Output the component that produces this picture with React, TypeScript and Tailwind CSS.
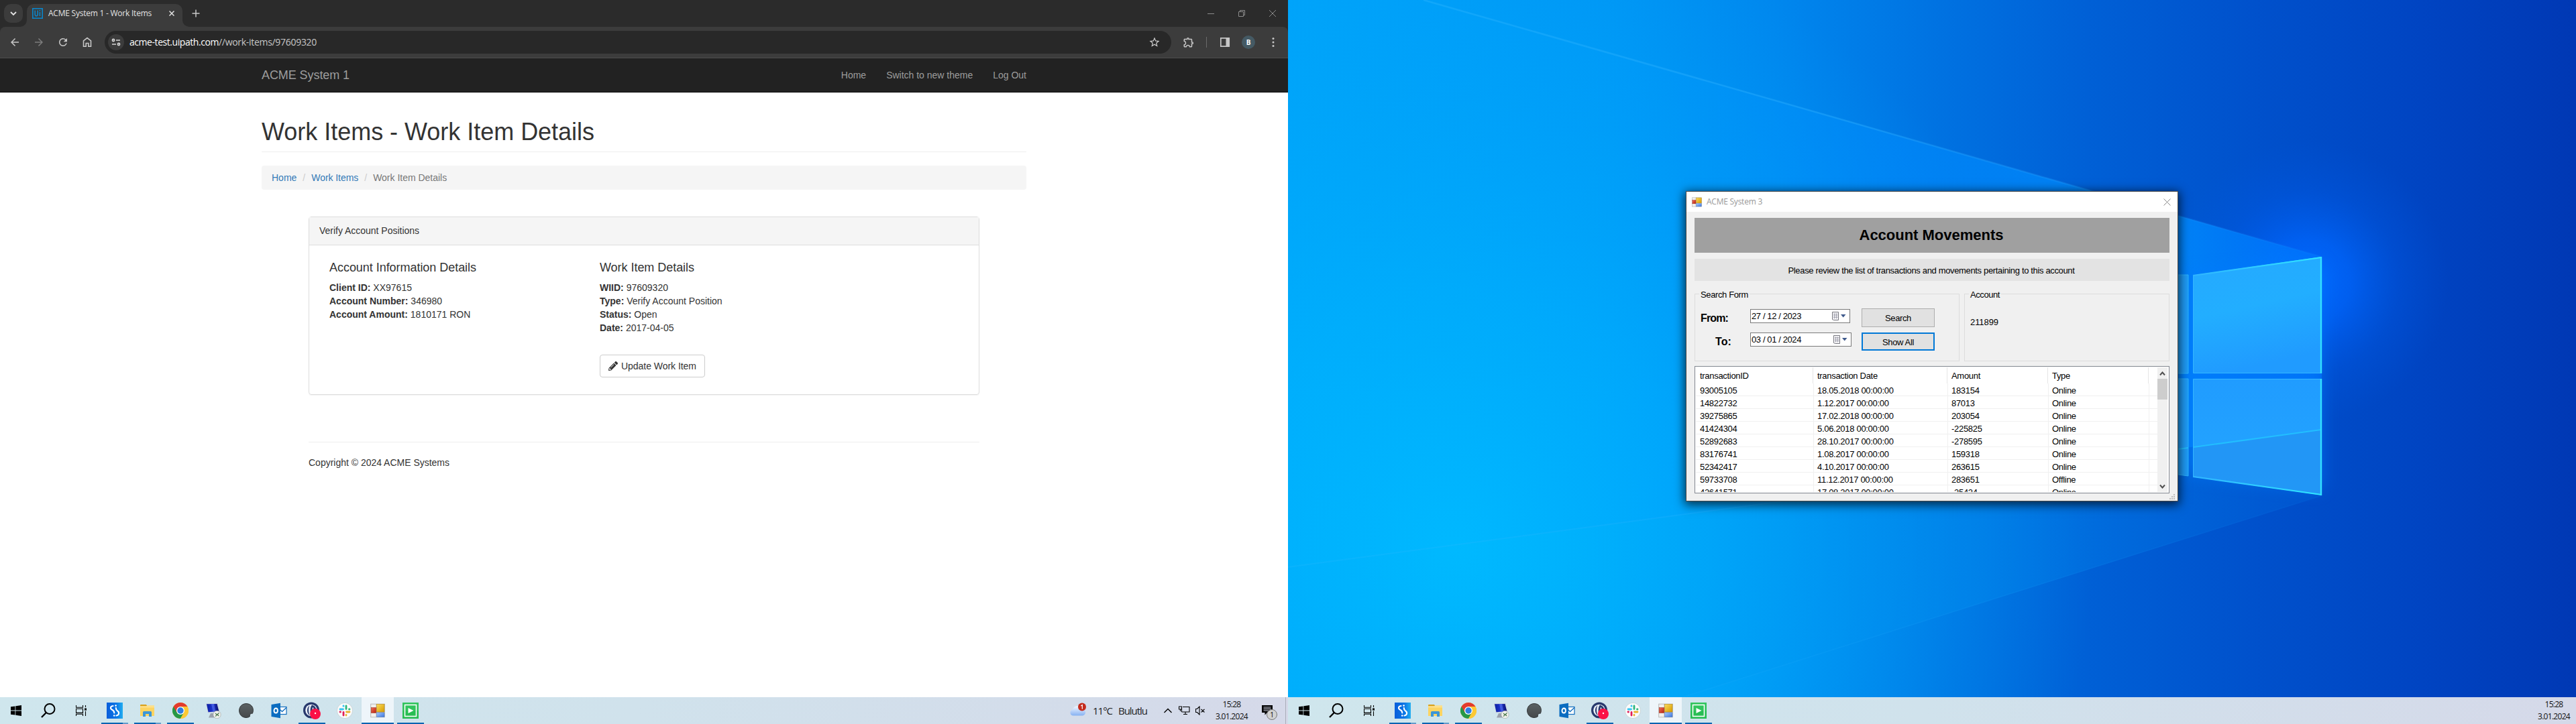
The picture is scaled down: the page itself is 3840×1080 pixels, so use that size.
import React, { useLayoutEffect, useRef, useState } from "react";
import { MdArrowBack, MdArrowForward, MdRefresh, MdStarBorder, MdOutlineExtension } from "react-icons/md";
import { FaPencilAlt } from "react-icons/fa";

const UI = "font-['Open_Sans','Noto_Sans',sans-serif]";

/* Single-line label whose tracking is tuned so that it takes up w pixels. */
function Fit({ w, children, className = "" }: { w: number; children: string; className?: string }) {
  const ref = useRef<HTMLSpanElement>(null);
  const [gap, setGap] = useState(0);
  useLayoutEffect(() => {
    if (ref.current) setGap((w - ref.current.getBoundingClientRect().width) / children.length);
  }, []);
  return (
    <span ref={ref} className={`inline-block whitespace-pre ${className}`} style={{ letterSpacing: `${gap}px` }}>
      {children}
    </span>
  );
}

/* ---------- Browser ---------- */

function TabStrip() {
  return (
    <div className="flex h-10 bg-[#2b2b2b] pl-[6px] pt-[6px]">
      <div className="flex h-7 w-7 items-center justify-center rounded-[10px] bg-[#3c3c3c]">
        <svg width="10" height="8" viewBox="0 0 10 8" fill="none" stroke="#e3e3e3" strokeWidth="1.8"><path d="M1 2l4 4 4-4" /></svg>
      </div>
      <div className="relative ml-[6px] flex h-[34px] w-[232px] items-center rounded-t-[10px] bg-[#3c3c3c] pb-[6px] pl-2">
        <svg className="absolute -left-[10px] bottom-0" width="10" height="10"><path d="M10 0v10H0A10 10 0 0 0 10 0z" fill="#3c3c3c" /></svg>
        <svg className="absolute -right-[10px] bottom-0" width="10" height="10"><path d="M0 0v10h10A10 10 0 0 1 0 0z" fill="#3c3c3c" /></svg>
        <svg width="16" height="16" viewBox="0 0 16 16" fill="none" stroke="#0a85ca">
          <rect x=".8" y=".8" width="14.4" height="14.4" strokeWidth="1.6" />
          <path d="M4.2 3.5v6q0 2.3 2 2.3t2-2.3v-6M11.4 6v6M11.4 3v1.8" strokeWidth="1.6" />
        </svg>
        <div className={`ml-2 text-[12px] leading-4 text-[#e3e3e3] ${UI}`}><Fit w={154}>ACME System 1 - Work Items</Fit></div>
        <svg className="ml-[26px]" width="8" height="8" stroke="#e3e3e3" strokeWidth="1.5"><path d="M.5 .5l7 7M7.5 .5l-7 7" /></svg>
      </div>
      <svg className="ml-[14px] mt-2" width="12" height="12" stroke="#c8c8c8" strokeWidth="1.5"><path d="M6 .5v11M.5 6h11" /></svg>
      <div className="ml-auto mr-[18px] flex h-7 items-center gap-9">
        <svg width="10" height="10" stroke="#8b8b8b"><path d="M0 5.5h10" /></svg>
        <svg width="10" height="10" fill="none" stroke="#8b8b8b"><path d="M.5 2.5h7v7h-7zM2.5 2V.5h7v7H8" /></svg>
        <svg width="10" height="10" stroke="#8b8b8b"><path d="M0 0l10 10M10 0L0 10" /></svg>
      </div>
    </div>
  );
}

function Toolbar() {
  return (
    <div className="bg-[#2b2b2b]">
      <div className="flex h-[47px] items-center rounded-t-[8px] border-b border-[#4d4d4d] bg-[#3c3c3c]">
        <div className="flex w-[156px] items-center gap-[18px] pl-[13px] text-[18px] text-[#c7c7c7]">
          <MdArrowBack />
          <MdArrowForward className="text-[#7c7c7c]" />
          <MdRefresh />
          <svg width="18" height="18" viewBox="0 0 18 18" fill="none" stroke="#c7c7c7" strokeWidth="1.6">
            <path d="M3.5 7v8.2h3.7v-4.7h3.6v4.7h3.7V7L9 2.6z" />
          </svg>
        </div>
        <div className="flex h-[34px] w-[1590px] items-center rounded-full bg-[#282828] pl-[5px]">
          <div className="flex h-6 w-6 items-center justify-center rounded-full bg-[#3c3c3c]">
            <svg width="14" height="12" viewBox="0 0 14 12" fill="none" stroke="#d8d8d8" strokeWidth="1.6">
              <circle cx="3" cy="3" r="1.6" /><path d="M7 3h6M1 9h6" /><circle cx="11" cy="9" r="1.6" />
            </svg>
          </div>
          <div className={`ml-2 flex text-[14px] leading-5 ${UI}`}>
            <Fit w={133} className="text-white">acme-test.uipath.com</Fit>
            <Fit w={146} className="text-[#c7c7c7]">//work-items/97609320</Fit>
          </div>
          <MdStarBorder className="ml-auto mr-4 text-[18px] text-[#d0d0d0]" />
        </div>
        <MdOutlineExtension className="ml-[17px] text-[18px] text-[#c7c7c7]" />
        <div className="ml-[17px] h-4 w-px bg-[#6b6b6b]" />
        <svg className="ml-[19px]" width="16" height="16" viewBox="0 0 16 16"><path d="M1.8 1.8h12.4v12.4H1.8z" fill="none" stroke="#c7c7c7" strokeWidth="1.7" /><path d="M9.5 1h5.5v14H9.5z" fill="#c7c7c7" /></svg>
        <div className={`ml-[17px] flex h-5 w-5 items-center justify-center rounded-full bg-[#455a64] text-[10px] font-bold text-white ${UI}`}>B</div>
        <svg className="ml-[25px]" width="4" height="16" fill="#c7c7c7"><circle cx="2" cy="2.5" r="1.5" /><circle cx="2" cy="8" r="1.5" /><circle cx="2" cy="13.5" r="1.5" /></svg>
      </div>
    </div>
  );
}

function Field({ name, value }: { name: string; value: string }) {
  return <div><b>{name}:</b> {value}</div>;
}

function WebPage() {
  return (
    <div className="flex-1 bg-white font-['Liberation_Sans',Arial,sans-serif] text-[14px] leading-5 text-[#333]">
      <div className="h-[51px] border-b border-[#080808] bg-[#222]">
        <div className="mx-auto flex h-[50px] w-[1140px] items-center text-[#9d9d9d]">
          <span className="text-[18px]"><Fit w={131}>ACME System 1</Fit></span>
          <div className="ml-auto flex gap-[30px]"><span>Home</span><Fit w={129}>Switch to new theme</Fit><span>Log Out</span></div>
        </div>
      </div>
      <div className="mx-auto w-[1140px] pt-[39px]">
        <div className="border-b border-[#eee] pb-[9px]">
          <h1 className="text-[36px] leading-[40px]"><Fit w={496}>Work Items - Work Item Details</Fit></h1>
        </div>
        <div className="mt-5 flex h-9 items-center rounded bg-[#f5f5f5] px-[15px]">
          <span className="text-[#337ab7]">Home</span>
          <span className="px-[9px] text-[#ccc]">/</span>
          <Fit w={70} className="text-[#337ab7]">Work Items</Fit>
          <span className="px-[9px] text-[#ccc]">/</span>
          <Fit w={110} className="text-[#777]">Work Item Details</Fit>
        </div>
        <div className="mx-[70px] mt-10 h-[266px] rounded border border-[#ddd] shadow-[0_1px_1px_rgba(0,0,0,0.05)]">
          <div className="h-[42px] border-b border-[#ddd] bg-[#f5f5f5] px-[15px] py-[10px]"><Fit w={149}>Verify Account Positions</Fit></div>
          <div className="flex px-[30px] pt-[23px]">
            <div className="w-[403px]">
              <h4 className="mb-[10px] text-[18px] leading-5"><Fit w={219}>Account Information Details</Fit></h4>
              <Field name="Client ID" value="XX97615" />
              <Field name="Account Number" value="346980" />
              <Field name="Account Amount" value="1810171 RON" />
            </div>
            <div>
              <h4 className="mb-[10px] text-[18px] leading-5"><Fit w={141}>Work Item Details</Fit></h4>
              <Field name="WIID" value="97609320" />
              <Field name="Type" value="Verify Account Position" />
              <Field name="Status" value="Open" />
              <Field name="Date" value="2017-04-05" />
              <div className="mt-[30px] flex h-[34px] w-[157px] items-center rounded border border-[#ccc] pl-3">
                <FaPencilAlt className="h-[14px] w-[14px]" />
                <Fit w={112} className="ml-[5px]">Update Work Item</Fit>
              </div>
            </div>
          </div>
        </div>
        <div className="mx-[70px] mt-[70px] border-t border-[#eee] pt-5">
          <Fit w={210}>Copyright © 2024 ACME Systems</Fit>
        </div>
      </div>
    </div>
  );
}

/* ---------- Taskbar ---------- */

function FormsIcon({ size }: { size: number }) {
  return (
    <svg width={size} height={size} viewBox="0 0 22 22">
      <defs>
        <linearGradient id="fy" x2="1" y2="1"><stop offset="0" stopColor="#fbdc5c" /><stop offset="1" stopColor="#d69a00" /></linearGradient>
        <linearGradient id="fr" x2="1" y2="1"><stop offset="0" stopColor="#f0705a" /><stop offset="1" stopColor="#b8200e" /></linearGradient>
        <linearGradient id="fb" x2="1" y2="1"><stop offset="0" stopColor="#a9cbff" /><stop offset="1" stopColor="#3a74dc" /></linearGradient>
      </defs>
      <rect x=".7" y="1.2" width="20.6" height="19.6" fill="#f2f0ee" stroke="#b9b9b9" />
      <path d="M1 13.5h20M9 1v20" stroke="#b9b9b9" />
      <rect x="9.5" y="1.5" width="11.5" height="11.5" fill="url(#fy)" stroke="#b78a1b" strokeWidth=".6" />
      <rect x="1.2" y="6.5" width="7.5" height="8" fill="url(#fr)" stroke="#963022" strokeWidth=".5" />
      <rect x="9.5" y="14" width="11.5" height="6.5" fill="url(#fb)" stroke="#4a72b8" strokeWidth=".5" />
    </svg>
  );
}

const icons: Record<string, React.ReactNode> = {
  start: <svg width="16" height="16" viewBox="0 0 16 16"><path d="M0 2.3L6.5 1.4v6.2H0zM7.3 1.3L16 0v7.6H7.3zM0 8.4h6.5v6.2L0 13.7zM7.3 8.4H16V16l-8.7-1.3z" /></svg>,
  search: <svg width="22" height="22" viewBox="0 0 22 22" fill="none" stroke="#000" strokeWidth="2"><circle cx="13" cy="8.5" r="7.5" /><path d="M7.8 14L1 21" strokeWidth="2.4" /></svg>,
  view: <svg width="16" height="16" viewBox="0 0 16 16" fill="none" stroke="#000" strokeWidth="1.1"><path d="M.5 0v3.3h10V0M.5 5.2h10v6.2H.5zM.5 16v-2.8h10V16M14.5 0v3M14.5 9v7" /><path d="M13 4.5h3v3.2h-3z" fill="#000" stroke="none" /></svg>,
  swift: (
    <svg width="24" height="24" viewBox="0 0 24 24">
      <defs><linearGradient id="sw" x2="1"><stop offset="0" stopColor="#0a5edb" /><stop offset=".6" stopColor="#0a76e6" /><stop offset="1" stopColor="#22aef0" /></linearGradient></defs>
      <rect width="24" height="24" fill="url(#sw)" />
      <g fill="none" stroke="#fff" strokeWidth="2.1" strokeLinecap="round"><path d="M9.5 5C5 5.500 5 9.500 8.500 11Q11.300 12.300 11.300 15.500" /><path d="M13.800 8Q13.800 11 16 12.300C19.500 14.500 18.500 19 14.500 19.500" /></g>
      <circle cx="13.600" cy="4.600" r="1.300" fill="#fff" /><circle cx="11.200" cy="19.500" r="1.300" fill="#fff" />
    </svg>
  ),
  explorer: (
    <svg width="22" height="20" viewBox="0 0 22 20">
      <path d="M0 2q0-1 1-1h8l1.500 2.500H0z" fill="#d9a11b" /><path d="M0 3.500h10l1-1H21V18H0z" fill="#fcd462" />
      <path d="M0 3.500h9L10.500 2.500H21v3H0z" fill="#ffe08a" /><path d="M4 19v-6.500q0-1.500 1.500-1.500h10q1.500 0 1.500 1.500V19h-4v-4H8v4z" fill="#3c96d8" />
    </svg>
  ),
  chrome: (
    <svg width="24" height="24" viewBox="0 0 24 24">
      <circle cx="12" cy="12" r="12" fill="#fcc934" />
      <path d="M12 12L1.600 6A12 12 0 0 0 12 24l5.200-9z" fill="#279847" />
      <path d="M12 12L6.800 15 1.600 6A12 12 0 0 1 22.400 6H12z" fill="#e33b2e" />
      <path d="M12 6h10.400A12 12 0 0 1 12 24l5.200-9z" fill="#fcc934" />
      <circle cx="12" cy="12" r="6" fill="#fff" /><circle cx="12" cy="12" r="4.700" fill="#2f7de1" />
    </svg>
  ),
  remote: (
    <svg width="24" height="24" viewBox="0 0 24 24">
      <defs><linearGradient id="rm" x2="1"><stop offset="0" stopColor="#0a1ea0" /><stop offset=".5" stopColor="#2036d0" /><stop offset="1" stopColor="#0a0f6a" /></linearGradient></defs>
      <path d="M1 1.500L18.500 1l3 13L4 15.500z" fill="#c9cfdc" /><path d="M2 2.300L17.500 2l2.800 11L4.500 14.200z" fill="url(#rm)" /><path d="M9 2.200l4-.1 2.500 11.200-4 .3z" fill="#5a74f0" opacity=".6" />
      <path d="M8 16h5v4l3 2.500H5z" fill="#9aa1ad" /><circle cx="17.500" cy="18" r="5.700" fill="#eef0ec" stroke="#a0a5a0" strokeWidth=".6" />
      <path d="M15 16l2.300 2-2 2.700M20.500 15.500L18 17.700l2 2.300" fill="none" stroke="#4f7a4c" strokeWidth="1.300" />
    </svg>
  ),
  shell: (
    <svg width="22" height="22" viewBox="0 0 22 22">
      <defs><linearGradient id="sh" y2="1" x2="0"><stop offset="0" stopColor="#5b6163" /><stop offset="1" stopColor="#45494b" /></linearGradient></defs>
      <path d="M11 .6C17.500.6 21.400 5 21.400 10.500c0 1.500-.3 3-1 4.700-3-.4-4.600 1.300-4 4.600-1.600 1.200-3.400 1.700-5.400 1.700C4.900 21.500.6 17 .6 11S5 .6 11 .6z" fill="url(#sh)" stroke="#34383a" strokeWidth="1" />
    </svg>
  ),
  outlook: (
    <svg width="24" height="24" viewBox="0 0 24 24">
      <rect x="11.500" y="6.500" width="11.500" height="11" fill="#fff" stroke="#0f6cbd" strokeWidth="1.200" /><path d="M12 9l4.500 4.500L23 7.500" fill="none" stroke="#0f6cbd" strokeWidth="1.300" />
      <path d="M.5 3L14 .8v22.400L.5 21z" fill="#0a6cc0" /><ellipse cx="7.200" cy="12" rx="2.700" ry="3.500" fill="none" stroke="#fff" strokeWidth="1.900" />
    </svg>
  ),
  recorder: (
    <svg width="26" height="26" viewBox="0 0 26 26">
      <circle cx="12" cy="12.500" r="12" fill="#27386c" /><circle cx="12" cy="12.500" r="8.800" fill="#e8edf6" />
      <path d="M9.500 5.500C4.500 9 5 17 10 20.500 7.500 15.500 7.500 9.500 9.500 5.500z" fill="#27386c" /><path d="M13 4.500C10 8 9.800 15 12.500 20.500L19 17C21 12 19 6.500 13 4.500z" fill="#27386c" />
      <path d="M14.500 8.500v6" stroke="#e8edf6" strokeWidth="1.600" />
      <circle cx="18" cy="18" r="8" fill="#fb1246" /><circle cx="18" cy="17" r="1.200" fill="#fff" />
    </svg>
  ),
  slack: (
    <svg width="24" height="24" viewBox="0 0 24 24">
      <circle cx="12" cy="12" r="11.600" fill="#fbfbfb" stroke="#bcc8cc" strokeWidth=".7" />
      <g strokeWidth="2.800" strokeLinecap="round" fill="none">
        <path d="M5 10h4.500" stroke="#36c5f0" /><path d="M10 4.800v.5" stroke="#36c5f0" /><path d="M14 5v4.500" stroke="#2eb67d" /><path d="M18.500 10h.5" stroke="#2eb67d" />
        <path d="M14.500 14H19" stroke="#ecb22e" /><path d="M14 18.500v.5" stroke="#ecb22e" /><path d="M10 14.500V19" stroke="#e01e5a" /><path d="M5 14h.5" stroke="#e01e5a" />
      </g>
    </svg>
  ),
  forms: <FormsIcon size={22} />,
  robot: (
    <svg width="24" height="24" viewBox="0 0 24 24">
      <rect width="24" height="24" fill="#27bd53" /><path d="M0 0h24v12H0z" fill="#3ccb68" opacity=".5" />
      <rect x="3.500" y="3.500" width="17" height="17" fill="none" stroke="#fff" strokeWidth="1.600" /><path d="M8.500 8l8 4-8 4z" fill="#fff" />
    </svg>
  ),
};

/* Widths of the slots and, for running programs, of the bar under the icon. */
const slots = [
  { id: "start", w: 48 },
  { id: "search", w: 48 },
  { id: "view", w: 50 },
  { id: "swift", w: 49, bar: "multi" },
  { id: "explorer", w: 49, bar: "multi" },
  { id: "chrome", w: 49, bar: "one" },
  { id: "remote", w: 49 },
  { id: "shell", w: 49 },
  { id: "outlook", w: 49 },
  { id: "recorder", w: 49, bar: "one" },
  { id: "slack", w: 50 },
  { id: "forms", w: 48, bar: "active" },
  { id: "robot", w: 50, bar: "one" },
];

function TaskIcons() {
  return (
    <div className="flex h-10">
      {slots.map((s) => (
        <div key={s.id} className={`flex h-10 shrink-0 flex-col items-center ${s.bar === "active" ? "bg-[#eef5fa]" : ""}`} style={{ width: s.w }}>
          <div className="flex h-[38px] items-center pt-[2px]">{icons[s.id]}</div>
          {s.bar === "active" && <div className="h-[2px] w-full bg-[#0063b1]" />}
          {s.bar === "one" && <div className="h-[2px] w-10 bg-[#0063b1]" />}
          {s.bar === "multi" && <div className="flex h-[2px] w-10"><div className="w-8 bg-[#0063b1]" /><div className="w-2 bg-[#629ccb]" /></div>}
        </div>
      ))}
    </div>
  );
}

function Clock() {
  return (
    <div className={`flex flex-col items-center text-[12px] leading-[18px] text-[#111] ${UI}`}>
      <Fit w={27}>15:28</Fit>
      <Fit w={48}>3.01.2024</Fit>
    </div>
  );
}

const BAR = "flex h-10 bg-linear-to-r from-[#cfe6ed] via-[#d0e2ec] to-[#d5d9e9]";

function MainTaskbar() {
  return (
    <div className={BAR}>
      <TaskIcons />
      <div className="ml-auto flex items-center">
        <svg width="27" height="24" viewBox="0 0 27 24">
          <defs><linearGradient id="cl" y2="1" x2="0"><stop offset="0" stopColor="#f4f8ff" /><stop offset="1" stopColor="#86b1f2" /></linearGradient></defs>
          <path d="M6 19.500a4.500 4.500 0 0 1-1-8.900A7 7 0 0 1 18.500 10a4.800 4.800 0 0 1 1.500 9.500z" fill="url(#cl)" />
          <circle cx="19" cy="6.500" r="6" fill="#c42b1c" /><path d="M17.300 5l2-1.300v6" fill="none" stroke="#fff" strokeWidth="1.200" />
        </svg>
        <div className={`ml-[8px] flex text-[15px] leading-5 text-[#222] ${UI}`}><Fit w={29}>11°C</Fit><Fit w={43} className="ml-[9px]">Bulutlu</Fit></div>
        <svg className="ml-[25px]" width="12" height="8" fill="none" stroke="#000" strokeWidth="1.400"><path d="M.5 7L6 1.500 11.500 7" /></svg>
        <svg className="ml-[10px]" width="17" height="14" viewBox="0 0 17 14" fill="none" stroke="#000" strokeWidth="1.100"><path d="M6 1.500h10v7.500H4.500M4.500 9V5.500M.5 1h4v4h-4zM7 12.500h6M10 9v3.500M2.500 5v3" /></svg>
        <svg className="ml-2" width="15" height="14" viewBox="0 0 15 14" fill="none" stroke="#000" strokeWidth="1.100"><path d="M.5 4.500h2L6 1v12L2.500 9.500h-2zM8.500 5l5 4.500M13.500 5l-5 4.500" /></svg>
        <div className="ml-[15px] w-[48px]"><Clock /></div>
        <div className="relative ml-[21px] h-[28px] w-[24px]">
          <svg width="16" height="16" viewBox="0 0 16 16" className="mt-[6px]"><path d="M0 0h16v11H8l-3.500 3.500V11H0z" /><path d="M2.500 3h11M2.500 5.500h11M2.500 8h8" stroke="#d5d9e9" /></svg>
          <div className={`absolute left-[7px] top-[12px] flex h-4 w-4 items-center justify-center rounded-full border border-[#777] bg-[#d2d2d2] text-[10px] leading-none text-black ${UI}`}>1</div>
        </div>
        <div className="ml-[11px] mr-[3px] h-10 w-px bg-[#a9adb8]" />
      </div>
    </div>
  );
}

/* ---------- Desktop ---------- */

function Wallpaper() {
  return (
    <svg width="1920" height="1040" viewBox="0 0 1920 1040" className="block">
      <defs>
        <linearGradient id="base" x2="1" y2="0">
          <stop offset="0" stopColor="#00a3fa" /><stop offset=".25" stopColor="#0097f5" /><stop offset=".38" stopColor="#0087ee" /><stop offset=".5" stopColor="#0073e2" />
          <stop offset=".62" stopColor="#0060d6" /><stop offset=".75" stopColor="#0051cc" /><stop offset=".88" stopColor="#0044c2" /><stop offset="1" stopColor="#0038b4" />
        </linearGradient>
        <radialGradient id="cyan" gradientUnits="userSpaceOnUse" cx="250" cy="820" r="950"><stop offset="0" stopColor="#00bbff" /><stop offset=".4" stopColor="#00b2fd" stopOpacity=".7" /><stop offset="1" stopColor="#00a0f8" stopOpacity="0" /></radialGradient>
        <radialGradient id="halo" gradientUnits="userSpaceOnUse" cx="1520" cy="420" r="210"><stop offset="0" stopColor="#006aff" /><stop offset=".3" stopColor="#0064fa" stopOpacity=".8" /><stop offset=".65" stopColor="#005cec" stopOpacity=".3" /><stop offset="1" stopColor="#0058e0" stopOpacity="0" /></radialGradient>
        <linearGradient id="beam" gradientUnits="userSpaceOnUse" x1="0" x2="1541" y1="0" y2="0"><stop offset="0" stopColor="#00b0ff" stopOpacity=".05" /><stop offset=".35" stopColor="#009cff" stopOpacity=".2" /><stop offset=".6" stopColor="#008cff" stopOpacity=".55" /><stop offset=".85" stopColor="#008cff" stopOpacity=".85" /><stop offset="1" stopColor="#0078ff" stopOpacity=".6" /></linearGradient>
        <linearGradient id="low" gradientUnits="userSpaceOnUse" x1="400" x2="1541" y1="0" y2="0"><stop offset="0" stopColor="#00a8f8" stopOpacity=".1" /><stop offset=".55" stopColor="#008cee" stopOpacity=".45" /><stop offset="1" stopColor="#0066de" stopOpacity=".3" /></linearGradient>
        <linearGradient id="ray" gradientUnits="userSpaceOnUse" x1="0" x2="1541" y1="0" y2="0"><stop offset="0" stopColor="#35baff" stopOpacity=".3" /><stop offset=".55" stopColor="#2fb0ff" stopOpacity=".4" /><stop offset="1" stopColor="#1e90ff" stopOpacity=".1" /></linearGradient>
        <linearGradient id="pane1" x2=".25" y2="1"><stop offset="0" stopColor="#25a9ff" /><stop offset=".5" stopColor="#22aeff" /><stop offset="1" stopColor="#209bff" /></linearGradient>
        <linearGradient id="pane2" x2="0" y2="1"><stop offset="0" stopColor="#209cff" /><stop offset="1" stopColor="#24a6ff" /></linearGradient>
        <linearGradient id="edge" gradientUnits="userSpaceOnUse" x1="1349" x2="1541" y1="0" y2="0"><stop offset="0" stopColor="#2fb4ff" /><stop offset="1" stopColor="#2fe6ff" /></linearGradient>
        <filter id="soft" x="-50%" y="-20%" width="200%" height="140%"><feGaussianBlur stdDeviation="12" /></filter>
      </defs>
      <rect width="1920" height="1040" fill="url(#base)" />
      <rect width="1920" height="1040" fill="url(#cyan)" />
      <rect width="1920" height="1040" fill="url(#halo)" />
      <path d="M202 0L1541 383V641L0 846V0z" fill="url(#beam)" />
      <path d="M0 846L1541 641v99L588 1040H0z" fill="url(#low)" />
      <path d="M202 0L1541 383" stroke="url(#ray)" strokeWidth="2.500" fill="none" />
      <path d="M0 846L735 748" stroke="url(#ray)" strokeWidth="2" fill="none" opacity=".6" />
      <path d="M1541 739L588 1040" stroke="url(#ray)" strokeWidth="1.500" fill="none" opacity=".3" />
      <path d="M1330 410L1541 392V730L1330 705z" fill="#007cff" opacity=".6" filter="url(#soft)" />
      <path d="M1327 410h15v147h-15zM1327 565h15v145l-15-2z" fill="#1f9cf8" stroke="#2cb4ff" />
      <path d="M1349.500 411L1540 383.500V556.500H1349.500z" fill="url(#pane1)" stroke="#35b8ff" />
      <path d="M1349.500 565.500H1540V738L1349.500 711z" fill="url(#pane2)" stroke="#35b8ff" />
      <path d="M1350 667L1540 641V737L1350 710z" fill="#2294f4" opacity=".85" />
      <path d="M1327 670l15-2M1350 667L1540 641" stroke="#22beff" strokeWidth="2" />
      <path d="M1349 411L1541 384M1349 711L1541 738" stroke="url(#edge)" strokeWidth="2.200" />
      <path d="M1540 383V557M1540 565V739" stroke="#33e0ff" strokeWidth="2.400" />
    </svg>
  );
}

function DateBox({ children, className }: { children: string; className: string }) {
  return (
    <div className={`flex h-[21px] items-center border border-[#7a7a7a] bg-white pl-[1px] pt-px ${className}`}>
      <Fit w={74}>{children}</Fit>
      <svg className="ml-auto mr-[5px]" width="22" height="14" viewBox="0 0 22 14">
        <path d="M1.500.5h9v12h-7l-2-1z" fill="#f4f4f6" stroke="#77777f" /><path d="M3 3.500h6.500M3 6h6.500M3 8.500h6.500M4.500 2.500v8M7.500 2.500v8" stroke="#9a9aa8" strokeWidth=".8" />
        <path d="M14 4h7.500L17.700 8.500z" fill="#3f5a8c" />
      </svg>
    </div>
  );
}

function GroupBox({ title, w, className, children }: { title: string; w: number; className: string; children: React.ReactNode }) {
  return (
    <div className={`relative h-[101px] border border-[#dcdcdc] ${className}`}>
      <div className="absolute -top-[7px] left-[6px] bg-[#f0f0f0] px-[2px]"><Fit w={w}>{title}</Fit></div>
      {children}
    </div>
  );
}

const rows = [
  ["93005105", "18.05.2018 00:00:00", "183154", "Online"],
  ["14822732", "1.12.2017 00:00:00", "87013", "Online"],
  ["39275865", "17.02.2018 00:00:00", "203054", "Online"],
  ["41424304", "5.06.2018 00:00:00", "-225825", "Online"],
  ["52892683", "28.10.2017 00:00:00", "-278595", "Online"],
  ["83176741", "1.08.2017 00:00:00", "159318", "Online"],
  ["52342417", "4.10.2017 00:00:00", "263615", "Online"],
  ["59733708", "11.12.2017 00:00:00", "283651", "Offline"],
  ["42641571", "17.08.2017 00:00:00", "-25424", "Online"],
];

function TransactionList() {
  return (
    <div className="mt-[7px] flex h-[190px] w-[708px] border border-[#828790] bg-white pl-px pt-px">
      <div className="h-[186px] w-[688px] overflow-hidden tracking-[-0.300px]">
        <div className="grid h-6 grid-cols-[175px_200px_150px_150px_auto] leading-[26px]">
          {["transactionID", "transaction Date", "Amount", "Type"].map((h) => (
            <div key={h} className="h-6 border-r border-[#e5e5e5] pl-[6px]">{h}</div>
          ))}
        </div>
        {rows.map((r) => (
          <div key={r[0]} className="grid h-[19px] grid-cols-[176px_200px_150px_150px_auto] border-b border-[#f0f0f0] leading-[21px]">
            <div className="h-[18px] border-r border-[#f0f0f0] pl-[6px]">{r[0]}</div>
            {r.slice(1).map((c, i) => (
              <div key={i} className="h-[18px] border-r border-[#f0f0f0] pl-[5px]">{c}</div>
            ))}
          </div>
        ))}
      </div>
      <div className="flex h-[186px] w-[15px] flex-col items-center bg-[#f0f0f0]">
        <svg className="mt-[6px]" width="9" height="7" fill="none" stroke="#505050" strokeWidth="2"><path d="M1 5.500l3.500-4L8 5.500" /></svg>
        <div className="mt-[4px] h-[31px] w-full bg-[#cdcdcd]" />
        <svg className="mb-[5px] mt-auto" width="9" height="7" fill="none" stroke="#505050" strokeWidth="2"><path d="M1 1.500l3.500 4L8 1.500" /></svg>
      </div>
    </div>
  );
}

function AccountWindow() {
  return (
    <div className="absolute left-[593px] top-[285px] h-[463px] w-[734px] border border-[#4a4a4a] bg-[#f0f0f0] font-['Liberation_Sans',Arial,sans-serif] text-[13px] leading-4 text-black shadow-[0_3px_14px_2px_rgba(0,0,0,0.700)]">
      <div className="flex h-[30px] items-center bg-white pl-2 pr-[10px]">
        <FormsIcon size={15} />
        <span className={`ml-[7px] text-[12px] text-[#999] ${UI}`}><Fit w={83}>ACME System 3</Fit></span>
        <svg className="ml-auto" width="11" height="11" stroke="#888"><path d="M.5 .5l10 10M10.500 .5l-10 10" /></svg>
      </div>
      <div className="px-3 pt-[9px]">
        <div className="flex h-[52px] items-center justify-center bg-[#a0a0a0] pr-[2px] text-[22px] font-bold"><Fit w={215}>Account Movements</Fit></div>
        <div className="mt-[9px] flex h-[33px] items-center justify-center bg-[#e3e3e3] pr-[2px] pt-[2px]"><Fit w={427}>Please review the list of transactions and movements pertaining to this account</Fit></div>
        <div className="mt-[19px] flex w-[708px] justify-between">
          <GroupBox title="Search Form" w={71} className="w-[395px]">
            <div className="flex pt-[21px]">
              <div className="w-[82px] text-[16px] font-bold">
                <div className="pl-[8px] pt-[7px]"><Fit w={41}>From:</Fit></div>
                <div className="pl-[30px] pt-[19px]"><Fit w={24}>To:</Fit></div>
              </div>
              <div className="flex w-[166px] flex-col gap-[14px] pt-px"><DateBox className="w-[149px]">27 / 12 / 2023</DateBox><DateBox className="w-[151px]">03 / 01 / 2024</DateBox></div>
              <div className="flex flex-col gap-2">
                <div className="flex h-7 w-[109px] items-center justify-center border border-[#adadad] bg-[#e1e1e1] pt-[2px]"><Fit w={39}>Search</Fit></div>
                <div className="flex h-[27px] w-[109px] items-center justify-center border-2 border-[#0078d7] bg-[#e1e1e1] pt-[2px]"><Fit w={47}>Show All</Fit></div>
              </div>
            </div>
          </GroupBox>
          <GroupBox title="Account" w={44} className="w-[306px]">
            <div className="pl-2 pt-[34px]"><Fit w={42}>211899</Fit></div>
          </GroupBox>
        </div>
        <TransactionList />
        <svg className="-mr-[9px] ml-auto mt-[1px]" width="9" height="9" fill="#bdbdbd"><path d="M6 0h2v2H6zM3 3h2v2H3zM6 3h2v2H6zM0 6h2v2H0zM3 6h2v2H3zM6 6h2v2H6z" /></svg>
      </div>
    </div>
  );
}

export default function App() {
  return (
    <div className="flex h-[1080px] w-[3840px] overflow-hidden">
      <div className="flex w-[1920px] flex-col">
        <TabStrip />
        <Toolbar />
        <WebPage />
        <MainTaskbar />
      </div>
      <div className="relative w-[1920px]">
        <Wallpaper />
        <AccountWindow />
        <div className={BAR}>
          <TaskIcons />
          <div className="ml-auto mr-[9px] flex items-center"><Clock /></div>
        </div>
      </div>
    </div>
  );
}
